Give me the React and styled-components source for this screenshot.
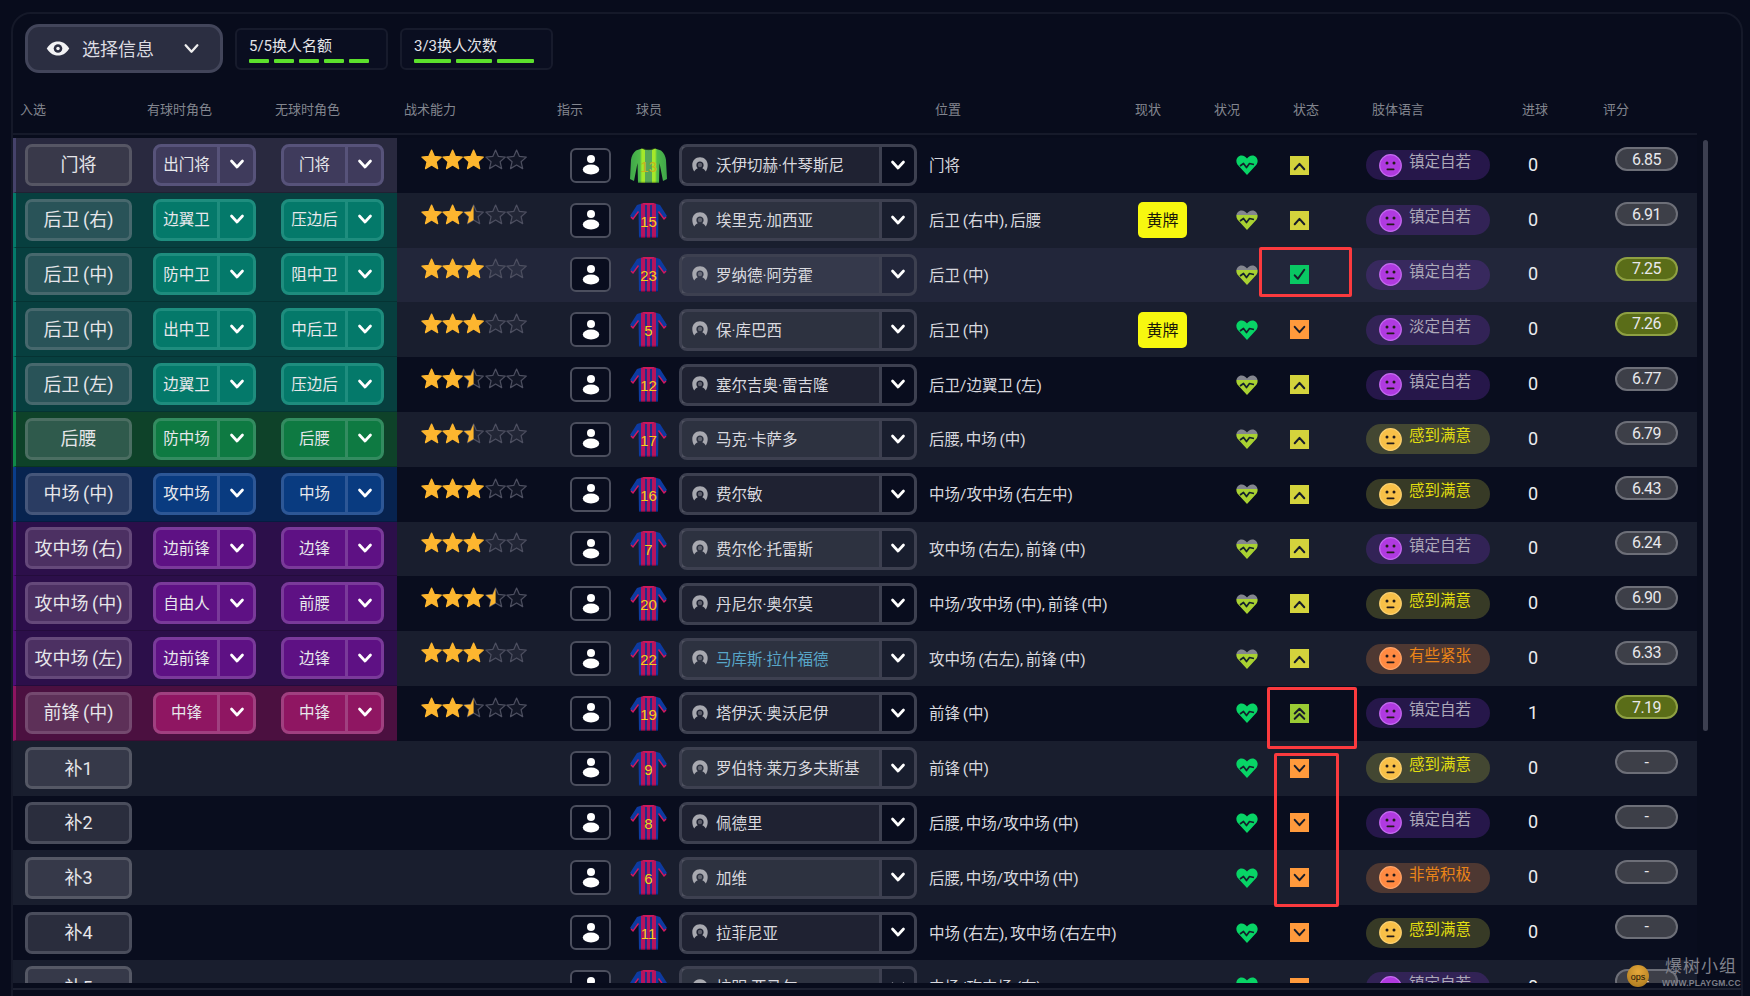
import React from 'react';
import styled, { createGlobalStyle } from 'styled-components';

const FONT = `Roboto, "Noto Sans CJK SC", sans-serif`;

const Global = createGlobalStyle`
  html, body { margin: 0; padding: 0; background: #080c1c; }
  body { font-family: ${FONT}; overflow: hidden; }
`;

const THEMES = {
  grey: { band: '#29293f', strip: '#45426a', posBg: '#39394a', posBd: '#565664', roleBg: '#3f3b5c', roleBd: '#57537a' },
  teal: { band: '#073f3f', strip: '#047a6a', posBg: '#295358', posBd: '#47686d', roleBg: '#04796a', roleBd: '#1e8d7e' },
  green: { band: '#0e4229', strip: '#0f8a48', posBg: '#2f5a4c', posBd: '#4b6e62', roleBg: '#0e7a42', roleBd: '#338c60' },
  blue: { band: '#07234f', strip: '#0a3d8a', posBg: '#2a3c62', posBd: '#45567a', roleBg: '#093b80', roleBd: '#2d5796' },
  purple: { band: '#2c0f4a', strip: '#4e0f78', posBg: '#4c3062', posBd: '#65497a', roleBg: '#5e1184', roleBd: '#7a3a9a' },
  magenta: { band: '#4b1040', strip: '#8e1460', posBg: '#5d3058', posBd: '#74496f', roleBg: '#8f1662', roleBd: '#a04080' },
};

const MOODS = {
  p: { pill: 'rgba(115,50,190,.28)', text: '#aca8b8', face: '#b03ae0', edge: '#c56af0' },
  y: { pill: 'rgba(190,190,60,.26)', text: '#e2de10', face: '#f8c048', edge: '#fbd070' },
  o: { pill: 'rgba(230,130,60,.26)', text: '#ea8418', face: '#ff8a42', edge: '#ffa468' },
};

const rows = [
  { pos: '门将', a: '出门将', b: '门将', t: 'grey', s: 3, n: 13, name: '沃伊切赫·什琴斯尼', where: '门将', heart: 'full', mood: 'up', body: '镇定自若', m: 'p', goals: 0, rate: '6.85' },
  { pos: '后卫 (右)', a: '边翼卫', b: '压边后', t: 'teal', s: 2.5, n: 15, name: '埃里克·加西亚', where: '后卫 (右中), 后腰', card: true, heart: 'half', mood: 'up', body: '镇定自若', m: 'p', goals: 0, rate: '6.91' },
  { pos: '后卫 (中)', a: '防中卫', b: '阻中卫', t: 'teal', s: 3, n: 23, name: '罗纳德·阿劳霍', where: '后卫 (中)', heart: 'half', mood: 'check', body: '镇定自若', m: 'p', goals: 0, rate: '7.25', good: true, hover: true },
  { pos: '后卫 (中)', a: '出中卫', b: '中后卫', t: 'teal', s: 3, n: 5, name: '保·库巴西', where: '后卫 (中)', card: true, heart: 'full', mood: 'down', body: '淡定自若', m: 'p', goals: 0, rate: '7.26', good: true },
  { pos: '后卫 (左)', a: '边翼卫', b: '压边后', t: 'teal', s: 2.5, n: 12, name: '塞尔吉奥·雷吉隆', where: '后卫/边翼卫 (左)', heart: 'half', mood: 'up', body: '镇定自若', m: 'p', goals: 0, rate: '6.77' },
  { pos: '后腰', a: '防中场', b: '后腰', t: 'green', s: 2.5, n: 17, name: '马克·卡萨多', where: '后腰, 中场 (中)', heart: 'half', mood: 'up', body: '感到满意', m: 'y', goals: 0, rate: '6.79' },
  { pos: '中场 (中)', a: '攻中场', b: '中场', t: 'blue', s: 3, n: 16, name: '费尔敏', where: '中场/攻中场 (右左中)', heart: 'half', mood: 'up', body: '感到满意', m: 'y', goals: 0, rate: '6.43' },
  { pos: '攻中场 (右)', a: '边前锋', b: '边锋', t: 'purple', s: 3, n: 7, name: '费尔伦·托雷斯', where: '攻中场 (右左), 前锋 (中)', heart: 'half', mood: 'up', body: '镇定自若', m: 'p', goals: 0, rate: '6.24' },
  { pos: '攻中场 (中)', a: '自由人', b: '前腰', t: 'purple', s: 3.5, n: 20, name: '丹尼尔·奥尔莫', where: '中场/攻中场 (中), 前锋 (中)', heart: 'half', mood: 'up', body: '感到满意', m: 'y', goals: 0, rate: '6.90' },
  { pos: '攻中场 (左)', a: '边前锋', b: '边锋', t: 'purple', s: 3, n: 22, name: '马库斯·拉什福德', link: true, where: '攻中场 (右左), 前锋 (中)', heart: 'half', mood: 'up', body: '有些紧张', m: 'o', goals: 0, rate: '6.33' },
  { pos: '前锋 (中)', a: '中锋', b: '中锋', t: 'magenta', s: 2.5, n: 19, name: '塔伊沃·奥沃尼伊', where: '前锋 (中)', heart: 'full', mood: 'dbl', body: '镇定自若', m: 'p', goals: 1, rate: '7.19', good: true },
  { pos: '补1', n: 9, name: '罗伯特·莱万多夫斯基', where: '前锋 (中)', heart: 'full', mood: 'down', body: '感到满意', m: 'y', goals: 0, rate: '-' },
  { pos: '补2', n: 8, name: '佩德里', where: '后腰, 中场/攻中场 (中)', heart: 'full', mood: 'down', body: '镇定自若', m: 'p', goals: 0, rate: '-' },
  { pos: '补3', n: 6, name: '加维', where: '后腰, 中场/攻中场 (中)', heart: 'full', mood: 'down', body: '非常积极', m: 'o', goals: 0, rate: '-' },
  { pos: '补4', n: 11, name: '拉菲尼亚', where: '中场 (右左), 攻中场 (右左中)', heart: 'full', mood: 'down', body: '感到满意', m: 'y', goals: 0, rate: '-' },
  { pos: '补5', n: 10, name: '拉明·亚马尔', where: '中场/攻中场 (右)', heart: 'full', mood: 'down', body: '镇定自若', m: 'p', goals: 0, rate: '-' },
];

const GRID = '384px 173px 60px 49px 238px 218px 90px 44px 61px 170px 66px 131px';

const Root = styled.div`
  position: relative;
  width: 1750px;
  height: 996px;
  overflow: hidden;
  background: #080c1c;
  padding: 12px 7px 0 11px;
  box-sizing: border-box;
`;
const Panel = styled.div`
  width: 100%;
  height: 1000px;
  box-sizing: border-box;
  border: 2px solid #151929;
  border-radius: 20px 20px 0 0;
  display: flex;
  flex-direction: column;
`;
const Toolbar = styled.div`
  display: flex;
  align-items: center;
  gap: 12px;
  padding: 10px 0 0 12px;
  height: 49px;
  box-sizing: content-box;
`;
const InfoSelect = styled.div`
  width: 198px;
  height: 49px;
  box-sizing: border-box;
  display: flex;
  align-items: center;
  padding: 0 20px 0 18px;
  background: #2b2e41;
  border: 3px solid #42455a;
  border-radius: 14px;
  color: #dcdce2;
  font-size: 18px;
`;
const InfoLabel = styled.span`
  margin-left: 12px;
  flex: 1;
  margin-top: -1px;
`;
const Quota = styled.div`
  width: 153px;
  height: 42px;
  box-sizing: border-box;
  padding: 5px 12px 0 12px;
  border: 2px solid #171b2c;
  border-radius: 6px;
  background: #0a0e20;
  color: #e4e4e8;
  font-size: 15px;
  line-height: 22px;
  display: flex;
  flex-direction: column;
`;
const QuotaBars = styled.div`
  display: flex;
  gap: 5px;
  margin-top: 2px;
  padding-right: 5px;
`;
const QuotaBar = styled.i`
  flex: 1;
  height: 4px;
  background: #5ce02c;
  border-radius: 1px;
`;
const HeaderRow = styled.div`
  display: grid;
  grid-template-columns: 127px 128px 129px 153px 79px 299px 200px 79px 79px 79px 150px 81px 1fr;
  align-items: center;
  width: 1684px;
  height: 51px;
  margin-top: 11px;
  padding-left: 7px;
  box-sizing: border-box;
  border-bottom: 2px solid #161a2a;
  color: #83868f;
  font-size: 13px;
`;
const Body = styled.div`
  display: flex;
  height: 845px;
  margin-top: 3px;
  overflow: hidden;
`;
const RowList = styled.div`
  width: 1684px;
  flex: none;
`;
const Row = styled.div`
  display: grid;
  grid-template-columns: ${GRID};
  align-items: center;
  height: 54.8px;
  background: ${(p) => (p.$hover ? '#22263a' : p.$light ? '#191e2e' : '#090d1e')};
`;
const Track = styled.div`
  width: 5px;
  margin: 2px 0 0 6px;
`;
const Thumb = styled.div`
  height: 591px;
  border-radius: 3px;
  background: #3c3f50;
`;
const Foot = styled.div`
  margin-top: 5px;
  height: 8px;
  border-top: 2px solid #1c2030;
`;
const Band = styled.div`
  height: 100%;
  display: flex;
  align-items: center;
  box-sizing: border-box;
  padding-left: ${(p) => (p.$t ? 9 : 12)}px;
  gap: 21px;
  background: ${(p) => (p.$t ? p.$t.band : 'transparent')};
  border-left: ${(p) => (p.$t ? `3px solid ${p.$t.strip}` : 'none')};
  border-bottom: ${(p) => (p.$t ? '1px solid rgba(0, 0, 0, 0.18)' : 'none')};
`;
const PosButton = styled.div`
  width: 107px;
  height: 42px;
  flex: none;
  box-sizing: border-box;
  display: flex;
  align-items: center;
  justify-content: center;
  padding-bottom: 3px;
  background: ${(p) => (p.$t ? p.$t.posBg : p.$light ? '#363949' : '#2a2d3d')};
  border: 3px solid ${(p) => (p.$t ? p.$t.posBd : p.$light ? '#555865' : '#4a4d5c')};
  border-radius: 7px;
  color: #e6e6ea;
  font-size: 18px;
  word-spacing: -1px;
`;
const RoleGroup = styled.div`
  display: flex;
  gap: 25px;
`;
const RoleSelect = styled.div`
  width: 103px;
  height: 42px;
  box-sizing: border-box;
  display: flex;
  background: ${(p) => p.$t.roleBg};
  border: 3px solid ${(p) => p.$t.roleBd};
  border-radius: 8px;
  color: #e8e8ec;
  font-size: 15.5px;
`;
const RoleLabel = styled.div`
  flex: 1;
  display: flex;
  align-items: center;
  justify-content: center;
  padding-bottom: 3px;
  border-right: 3px solid ${(p) => p.$t.roleBd};
`;
const RoleArrow = styled.div`
  width: 33px;
  flex: none;
  display: flex;
  align-items: center;
  justify-content: center;
  padding-bottom: 1px;
`;
const Stars = styled.div`
  display: flex;
  padding-left: 24px;
  margin-bottom: 12px;
`;
const InstrButton = styled.div`
  width: 41px;
  height: 35px;
  box-sizing: border-box;
  display: flex;
  align-items: center;
  justify-content: center;
  background: #090d1e;
  border: 2.5px solid #4c4f5e;
  border-radius: 6px;
`;
const JerseyBox = styled.div`
  width: 37px;
  height: 37px;
`;
const PlayerSelect = styled.div`
  width: 238px;
  height: 42px;
  box-sizing: border-box;
  display: flex;
  border: 3px solid #3d4050;
  border-radius: 8px;
`;
const PlayerName = styled.div`
  flex: 1;
  min-width: 0;
  display: flex;
  align-items: center;
  gap: 8px;
  padding: 0 0 2px 10px;
  background: rgba(255, 255, 255, 0.09);
  border-right: 3px solid #3d4050;
  color: ${(p) => (p.$link ? '#58a6c8' : '#d9d9df')};
  font-size: 15.5px;
  white-space: nowrap;
`;
const PlayerArrow = styled.div`
  width: 32px;
  flex: none;
  display: flex;
  align-items: center;
  justify-content: center;
  padding-bottom: 1px;
`;
const Where = styled.div`
  padding: 0 0 2px 12px;
  color: #d8d8de;
  font-size: 15.5px;
  word-spacing: -1.1px;
  white-space: nowrap;
`;
const Current = styled.div`
  padding-left: 3px;
`;
const YellowCard = styled.div`
  width: 49px;
  height: 36px;
  display: flex;
  align-items: center;
  justify-content: center;
  padding-bottom: 2px;
  box-sizing: border-box;
  background: #f7f80f;
  border-radius: 5px;
  color: #17170a;
  font-size: 16px;
`;
const Centered = styled.div`
  display: flex;
  justify-content: center;
`;
const MoodSquare = styled.div`
  width: 19px;
  height: 19px;
  display: flex;
  align-items: center;
  justify-content: center;
  background: ${(p) => p.$c};
`;
const PillCell = styled.div`
  padding-left: 36px;
`;
const Pill = styled.div`
  width: 124px;
  height: 30px;
  box-sizing: border-box;
  display: flex;
  align-items: center;
  gap: 7px;
  padding-left: 13px;
  background: ${(p) => p.$m.pill};
  border-radius: 15px;
  color: ${(p) => p.$m.text};
  font-size: 15.5px;
`;
const PillText = styled.span`
  margin-top: -10px;
`;
const Goals = styled.div`
  text-align: center;
  color: #ececf0;
  font-size: 18px;
  padding-bottom: 2px;
`;
const RatingCell = styled.div`
  padding-left: 49px;
  margin-bottom: 12px;
`;
const Rating = styled.div`
  width: 63px;
  height: 24px;
  box-sizing: border-box;
  display: flex;
  align-items: center;
  justify-content: center;
  background: ${(p) => (p.$good ? '#5a6d18' : '#3d3f48')};
  border: 2.5px solid ${(p) => (p.$good ? '#8ea042' : '#6d6f78')};
  border-radius: 12px;
  color: #e8e8ec;
  font-size: 16px;
  letter-spacing: -0.5px;
`;
const Note = styled.div`
  position: absolute;
  left: ${(p) => p.$x}px;
  top: ${(p) => p.$y}px;
  width: ${(p) => p.$w}px;
  height: ${(p) => p.$h}px;
  box-sizing: border-box;
  border: 3px solid #fb3a3e;
  border-radius: 2px;
`;
const Watermark = styled.div`
  position: absolute;
  left: 1627px;
  top: 955px;
  width: 118px;
  height: 36px;
`;
const WatermarkLogo = styled.div`
  position: absolute;
  left: 0;
  top: 10px;
  width: 22px;
  height: 22px;
  border-radius: 50%;
  background: radial-gradient(circle at 50% 30%, #e6a83a, #a4741c);
  color: #1a1408;
  font-size: 9px;
  line-height: 24px;
  text-align: center;
  font-family: "Liberation Sans", sans-serif;
`;
const WatermarkName = styled.div`
  position: absolute;
  left: 38px;
  top: -1px;
  color: #80828c;
  font-size: 17px;
  letter-spacing: 1px;
  white-space: nowrap;
  line-height: 24px;
`;
const WatermarkUrl = styled.div`
  position: absolute;
  left: 35px;
  top: 21px;
  color: #7c7e88;
  font-family: "Liberation Sans", sans-serif;
  font-size: 8.5px;
  font-weight: 700;
  letter-spacing: 0.2px;
  white-space: nowrap;
  line-height: 14px;
`;

const Chevron = ({ size = 16, color = '#fff', w = 2.7 }) => (
  <svg width={size} height={size} viewBox="0 0 16 16" fill="none">
    <polyline points="2.5,5 8,11 13.5,5" stroke={color} strokeWidth={w} strokeLinecap="round" strokeLinejoin="round" />
  </svg>
);

const Eye = () => (
  <svg width="24" height="15" viewBox="0 0 22 14">
    <path d="M0.5 7 C4 1.5 7.5 0.5 11 0.5 C14.5 0.5 18 1.5 21.5 7 C18 12.5 14.5 13.5 11 13.5 C7.5 13.5 4 12.5 0.5 7 Z" fill="#f2f2f4" />
    <circle cx="11" cy="7" r="4" fill="#2b2e41" />
    <circle cx="11" cy="7" r="1.6" fill="#f2f2f4" />
  </svg>
);

const STAR = '12,1.2 15.2,8.4 23,9.2 17.1,14.4 18.9,22.2 12,18.1 5.1,22.2 6.9,14.4 1,9.2 8.8,8.4';
const STAR_HALF = '12,1.2 8.8,8.4 1,9.2 6.9,14.4 5.1,22.2 12,18.1';

const Star = ({ fill }) => (
  <svg width="21.2" height="21.2" viewBox="0 0 24 24">
    <polygon points={STAR} fill={fill === 1 ? '#fdb62f' : 'rgba(255,255,255,.04)'} stroke={fill === 1 ? '#fdb62f' : '#4d4f60'} strokeWidth="1.4" strokeLinejoin="round" />
    {fill === 0.5 && <polygon points={STAR_HALF} fill="#fdb62f" />}
  </svg>
);

const StarRow = ({ value }) => (
  <Stars>
    {[0, 1, 2, 3, 4].map((i) => (
      <Star key={i} fill={value >= i + 1 ? 1 : value >= i + 0.5 ? 0.5 : 0} />
    ))}
  </Stars>
);

const Person = () => (
  <svg width="18" height="22" viewBox="0 0 18 22" fill="#fff">
    <circle cx="9" cy="5" r="4" />
    <ellipse cx="9" cy="15.5" rx="8.2" ry="5" />
  </svg>
);

const PlayerIcon = () => (
  <svg width="16" height="15" viewBox="0 0 16 15">
    <path fill="#a8a9b0" d="M8 0.3 C12.5 0.3 15.7 3.6 15.7 8 C15.7 10.6 15 12.6 13.8 14.6 C13 12.8 11.6 11.7 10.2 11.2 C11.2 10.4 11.6 9.2 11.6 8 C11.6 6 10 4.5 8 4.5 C6 4.5 4.4 6 4.4 8 C4.4 9.2 4.8 10.4 5.8 11.2 C4.4 11.7 3 12.8 2.2 14.6 C1 12.6 0.3 10.6 0.3 8 C0.3 3.6 3.5 0.3 8 0.3 Z" />
    <circle cx="8" cy="8" r="2.2" fill="#a8a9b0" opacity="0.45" />
  </svg>
);

const Jersey = ({ n, id }) => {
  const gk = n === 13;
  const gid = `kit-${id}`;
  const body = gk
    ? 'M12 1.5 C14 3 23 3 25 1.5 L31 3.5 C34 6 35.5 9 36 13 L37 32 L33 34 L29.5 16 L29 36 L8 36 L7.5 16 L4 34 L0 32 L1 13 C1.5 9 3 6 6 3.5 Z'
    : 'M12 1.5 L14 1 L23 1 L25 1.5 L30 3 L37 14 L34 17 L28.5 9.5 L28 36 L9 36 L8.5 9.5 L3 17 L0 14 L7 3 Z';
  const stops = gk
    ? [['#3fa64a', 0], ['#4fbb4a', 10], ['#a4e82a', 12], ['#a4e82a', 15], ['#58a858', 15], ['#58a858', 22], ['#a4e82a', 22], ['#a4e82a', 25], ['#4fbb4a', 27], ['#3fa64a', 37]]
    : [['#0d3aa0', 0], ['#0d3aa0', 11], ['#b5145e', 11], ['#b5145e', 15], ['#1f2f8c', 15], ['#1f2f8c', 17], ['#b5145e', 17], ['#b5145e', 20], ['#1f2f8c', 20], ['#1f2f8c', 22], ['#b5145e', 22], ['#b5145e', 26], ['#0d3aa0', 26], ['#0d3aa0', 37]];
  return (
    <JerseyBox>
      <svg width="37" height="37" viewBox="0 0 37 37">
        <defs>
          <linearGradient id={gid} gradientUnits="userSpaceOnUse" x1="0" y1="0" x2="37" y2="0">
            {stops.map(([c, o], i) => (
              <stop key={i} offset={o / 37} stopColor={c} />
            ))}
          </linearGradient>
        </defs>
        <path d={body} fill={`url(#${gid})`} />
        {gk ? (
          <path d="M13 1.5 C15 3 22 3 24 1.5" stroke="#1b3a1b" strokeWidth="1" fill="none" />
        ) : (
          <>
            <path d="M12.5 1.5 C14.5 3.5 22.5 3.5 24.5 1.5 L23 1 L14 1 Z" fill="#cc1a5c" />
            <path d="M1 15 L3 17 L8.5 9.5" stroke="#d4175e" strokeWidth="1.4" fill="none" />
            <path d="M36 15 L34 17 L28.5 9.5" stroke="#d4175e" strokeWidth="1.4" fill="none" />
          </>
        )}
        <rect x={gk ? 8 : 9} y="34.8" width={gk ? 21 : 19} height="1.2" fill="rgba(0,0,0,.35)" />
        <text x="18.5" y="24.5" textAnchor="middle" fontFamily="Liberation Sans, sans-serif" fontSize="15" fill={gk ? '#c8b41c' : '#f4cf1f'}>
          {n}
        </text>
      </svg>
    </JerseyBox>
  );
};

const HEART = 'M12 22 L2.4 11.4 C-0.2 7.2 2.4 2.4 6.6 2.4 C9 2.4 11 3.8 12 5.6 C13 3.8 15 2.4 17.4 2.4 C21.6 2.4 24.2 7.2 21.6 11.4 Z';

const Heart = ({ kind, id }) => {
  const gid = `hp-${id}`;
  return (
    <svg width="24" height="24" viewBox="0 0 24 24">
      {kind === 'half' && (
        <defs>
          <linearGradient id={gid} x1="0" y1="0" x2="0" y2="1">
            <stop offset="0.26" stopColor="#84868f" />
            <stop offset="0.26" stopColor="#a9d132" />
          </linearGradient>
        </defs>
      )}
      <path d={HEART} fill={kind === 'half' ? `url(#${gid})` : '#08d466'} />
      <polyline points="5,13 8.5,10.5 11.5,14.5 14.5,10.5 19,11.5" fill="none" stroke="#14202c" strokeWidth="1.7" strokeLinejoin="round" />
    </svg>
  );
};

const MOOD_ICON = {
  up: { c: '#d4d33c', d: <polyline points="3.5,11.5 8,6.5 12.5,11.5" /> },
  down: { c: '#ff9a3c', d: <polyline points="3.5,5.5 8,10.5 12.5,5.5" /> },
  check: { c: '#09c863', d: <polyline points="3.5,8.8 6.5,12 12.5,3.5" /> },
  dbl: {
    c: '#9acb34',
    d: (
      <>
        <polyline points="3.5,8 8,3.5 12.5,8" />
        <polyline points="3.5,13 8,8.5 12.5,13" />
      </>
    ),
  },
};

const MoodIcon = ({ kind }) => (
  <MoodSquare $c={MOOD_ICON[kind].c}>
    <svg width="17" height="17" viewBox="0 0 16 16" fill="none" stroke="#171c2a" strokeWidth="1.9" strokeLinecap="round" strokeLinejoin="round">
      {MOOD_ICON[kind].d}
    </svg>
  </MoodSquare>
);

const Face = ({ m }) => (
  <svg width="23" height="23" viewBox="0 0 23 23">
    <circle cx="11.5" cy="11.5" r="10.8" fill={m.face} stroke={m.edge} strokeWidth="1.2" />
    <circle cx="8" cy="9" r="1.5" fill="#221a1a" />
    <circle cx="15" cy="9" r="1.5" fill="#221a1a" />
    <rect x="7.5" y="14.6" width="8" height="1.7" rx="0.8" fill="#221a1a" />
  </svg>
);

const Role = ({ t, label }) => (
  <RoleSelect $t={t}>
    <RoleLabel $t={t}>{label}</RoleLabel>
    <RoleArrow>
      <Chevron />
    </RoleArrow>
  </RoleSelect>
);

const HEADERS = ['入选', '有球时角色', '无球时角色', '战术能力', '指示', '球员', '位置', '现状', '状况', '状态', '肢体语言', '进球', '评分'];

const Quotas = [
  { label: '5/5换人名额', count: 5 },
  { label: '3/3换人次数', count: 3 },
];

export default function App() {
  return (
    <Root>
      <Global />
      <Panel>
        <Toolbar>
          <InfoSelect>
            <Eye />
            <InfoLabel>选择信息</InfoLabel>
            <Chevron size={17} color="#eee" w={2.2} />
          </InfoSelect>
          {Quotas.map((q) => (
            <Quota key={q.label}>
              {q.label}
              <QuotaBars>
                {Array.from({ length: q.count }, (_, i) => (
                  <QuotaBar key={i} />
                ))}
              </QuotaBars>
            </Quota>
          ))}
        </Toolbar>
        <HeaderRow>
          {HEADERS.map((h) => (
            <span key={h}>{h}</span>
          ))}
        </HeaderRow>
        <Body>
          <RowList>
            {rows.map((r, i) => {
              const t = r.t ? THEMES[r.t] : null;
              const light = i % 2 === 1;
              const m = MOODS[r.m];
              return (
                <Row key={r.pos + i} $light={light} $hover={r.hover}>
                  <Band $t={t}>
                    <PosButton $t={t} $light={light}>{r.pos}</PosButton>
                    {t && (
                      <RoleGroup>
                        <Role t={t} label={r.a} />
                        <Role t={t} label={r.b} />
                      </RoleGroup>
                    )}
                  </Band>
                  {t ? <StarRow value={r.s} /> : <div />}
                  <InstrButton>
                    <Person />
                  </InstrButton>
                  <Jersey n={r.n} id={i} />
                  <PlayerSelect>
                    <PlayerName $link={r.link}>
                      <PlayerIcon />
                      {r.name}
                    </PlayerName>
                    <PlayerArrow>
                      <Chevron />
                    </PlayerArrow>
                  </PlayerSelect>
                  <Where>{r.where}</Where>
                  <Current>{r.card && <YellowCard>黄牌</YellowCard>}</Current>
                  <Centered>
                    <Heart kind={r.heart} id={i} />
                  </Centered>
                  <Centered>
                    <MoodIcon kind={r.mood} />
                  </Centered>
                  <PillCell>
                    <Pill $m={m}>
                      <Face m={m} />
                      <PillText>{r.body}</PillText>
                    </Pill>
                  </PillCell>
                  <Goals>{r.goals}</Goals>
                  <RatingCell>
                    <Rating $good={r.good}>{r.rate}</Rating>
                  </RatingCell>
                </Row>
              );
            })}
          </RowList>
          <Track>
            <Thumb />
          </Track>
        </Body>
        <Foot />
      </Panel>
      <Note $x={1259} $y={247} $w={93} $h={50} />
      <Note $x={1267} $y={687} $w={90} $h={62} />
      <Note $x={1274} $y={753} $w={65} $h={154} />
      <Watermark>
        <WatermarkLogo>ops</WatermarkLogo>
        <WatermarkName>爆树小组</WatermarkName>
        <WatermarkUrl>WWW.PLAYGM.CC</WatermarkUrl>
      </Watermark>
    </Root>
  );
}
